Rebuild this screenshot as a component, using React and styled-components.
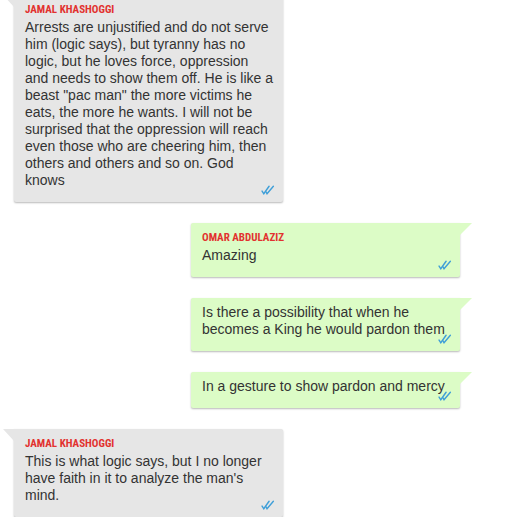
import React from 'react';
import styled, { createGlobalStyle } from 'styled-components';

const GlobalStyle = createGlobalStyle`
  body {
    margin: 0;
    background: #fff;
    font-family: "Liberation Sans", Arial, sans-serif;
  }
`;

const Chat = styled.div`
  display: flex;
  flex-direction: column;
  gap: 21px;
  padding: 0 66px 0 14px;
  margin-top: -5px;
`;

const Bubble = styled.div`
  position: relative;
  align-self: ${props => (props.$out ? 'flex-end' : 'flex-start')};
  width: 269px;
  box-sizing: border-box;
  padding: 6px 10px 13px 11px;
  background: ${props => (props.$out ? '#dcfcc6' : '#e6e6e6')};
  border-radius: ${props => (props.$out ? '2px 0 2px 2px' : '0 2px 2px 2px')};
  box-shadow: 0 1px 2px rgba(0, 0, 0, 0.28);

  &::before {
    content: '';
    position: absolute;
    top: 0;
    ${props => (props.$out ? 'right: -12px;' : 'left: -11px;')}
    width: 0;
    height: 0;
    border-top: 12px solid ${props => (props.$out ? '#dcfcc6' : '#e6e6e6')};
    ${props =>
      props.$out
        ? 'border-right: 12px solid transparent;'
        : 'border-left: 11px solid transparent;'}
  }
`;

const Sender = styled.div`
  font-family: "Liberation Sans Narrow", "Roboto Condensed", "Arial Narrow", sans-serif;
  font-stretch: condensed;
  font-weight: bold;
  font-size: 11px;
  line-height: 18px;
  color: #e2322f;
`;

const Text = styled.div`
  font-size: 14px;
  line-height: 17px;
  color: #333;
`;

const Ticks = styled.svg`
  position: absolute;
  right: 8px;
  bottom: 7px;
  width: 14px;
  height: 10px;
`;

function DoubleTick() {
  return (
    <Ticks viewBox="0 0 13 9" fill="none" stroke="#3f9fd8" strokeWidth="1.3" strokeLinecap="round">
      <path d="M1 5.5 L2.6 8 L7.5 1" />
      <path d="M4.6 6.2 L5.6 8 L11.5 1" />
    </Ticks>
  );
}

const messages = [
  {
    out: false,
    sender: 'JAMAL KHASHOGGI',
    text:
      'Arrests are unjustified and do not serve him (logic says), but tyranny has no logic, but he loves force, oppression and needs to show them off. He is like a beast "pac man" the more victims he eats, the more he wants. I will not be surprised that the oppression will reach even those who are cheering him, then others and others and so on. God knows',
  },
  { out: true, sender: 'OMAR ABDULAZIZ', text: 'Amazing' },
  { out: true, text: 'Is there a possibility that when he becomes a King he would pardon them' },
  { out: true, text: 'In a gesture to show pardon and mercy' },
  {
    out: false,
    sender: 'JAMAL KHASHOGGI',
    text: "This is what logic says, but I no longer have faith in it to analyze the man's mind.",
  },
];

export default function App() {
  return (
    <>
      <GlobalStyle />
      <Chat>
        {messages.map((m, i) => (
          <Bubble key={i} $out={m.out}>
            {m.sender && <Sender>{m.sender}</Sender>}
            <Text>{m.text}</Text>
            <DoubleTick />
          </Bubble>
        ))}
      </Chat>
    </>
  );
}
